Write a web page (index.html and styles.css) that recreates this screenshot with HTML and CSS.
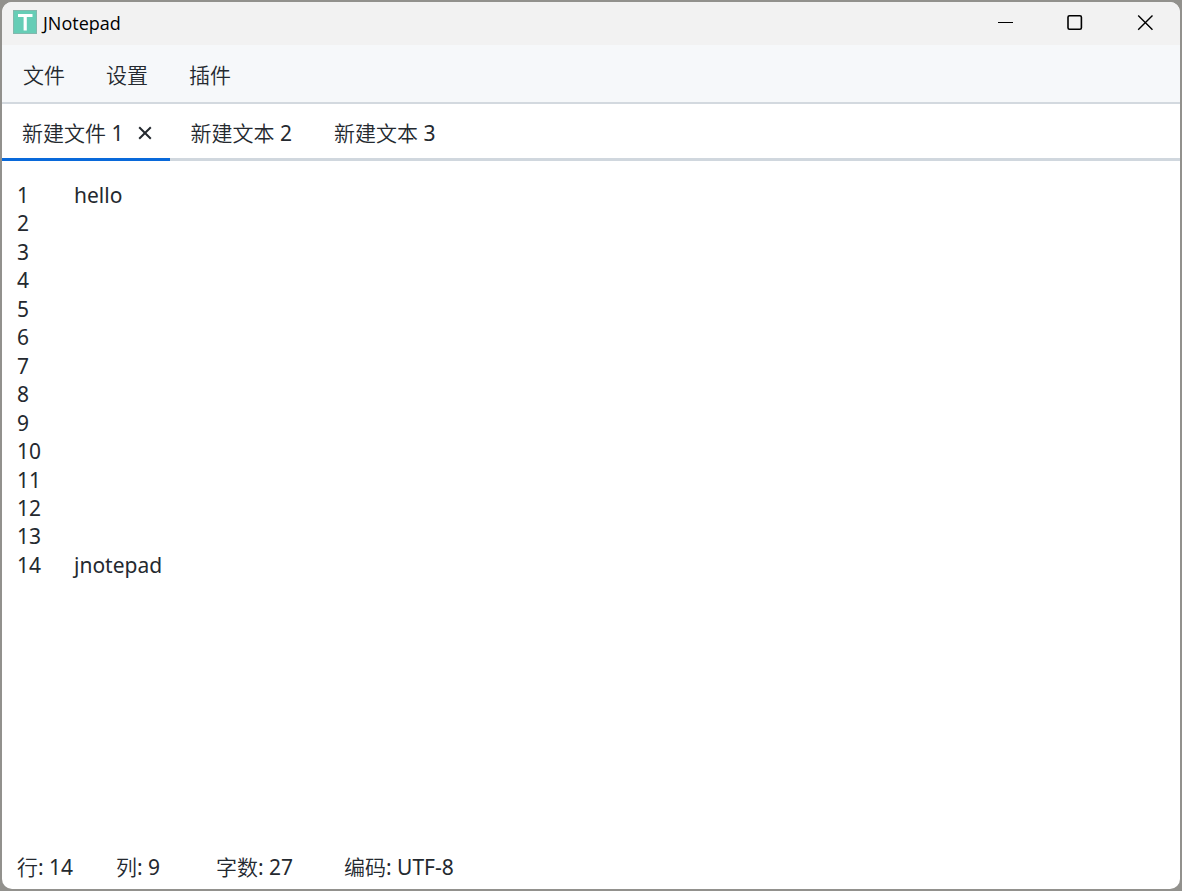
FILE: index.html
```html
<!DOCTYPE html>
<html lang="zh-CN">
<head>
<meta charset="utf-8">
<title>JNotepad</title>
<link rel="stylesheet" href="styles.css">
</head>
<body>
<div class="window">
  <header class="titlebar">
    <svg class="logo" viewBox="0 0 24 24" aria-hidden="true">
      <rect x=".5" y=".5" width="23" height="23" fill="#66cdb6" stroke="#83b8ad"/>
      <path d="M5 5.5H19.5M12.2 5.5V20.5" stroke="#fff" stroke-width="3.2" fill="none"/>
    </svg>
    <span class="app-name">JNotepad</span>
    <div class="window-controls">
      <button aria-label="最小化"><svg viewBox="0 0 16 16"><path d="M1 7.5H16"/></svg></button>
      <button aria-label="最大化"><svg viewBox="0 0 16 16"><rect class="bold" x="1" y=".8" width="13.4" height="13.4" rx="1.5"/></svg></button>
      <button aria-label="关闭"><svg viewBox="0 0 16 16"><path class="cross" d="M1.2 .5L15.5 14.8M15.5 .5L1.2 14.8"/></svg></button>
    </div>
  </header>
  <nav class="menubar">
    <button>文件</button>
    <button>设置</button>
    <button>插件</button>
  </nav>
  <div class="tabs">
    <div class="tab active">
      <button>新建文件 <span class="value">1</span></button>
      <button class="tab-close" aria-label="关闭标签"><svg viewBox="0 0 14 14"><path d="M1.2 1.2L12.8 12.8M12.8 1.2L1.2 12.8"/></svg></button>
    </div>
    <div class="tab"><button>新建文本 <span class="value">2</span></button></div>
    <div class="tab"><button>新建文本 <span class="value">3</span></button></div>
  </div>
  <main class="editor">
    <div class="gutter">1
2
3
4
5
6
7
8
9
10
11
12
13
14</div>
    <textarea class="content" aria-label="文本内容" spellcheck="false">hello












jnotepad</textarea>
  </main>
  <footer class="statusbar">
    <span class="row">行<span class="value">: 14</span></span>
    <span class="column">列<span class="value">: 9</span></span>
    <span class="count">字数<span class="value">: 27</span></span>
    <span>编码<span class="value">: UTF-8</span></span>
  </footer>
</div>
</body>
</html>
```

FILE: styles.css
```css
* {
  box-sizing: border-box;
}

body {
  margin: 0;
  height: 100vh;
  padding: 2px;
  background: #92918d;
  color: #24292f;
  font-family: "Noto Sans", "Noto Sans CJK SC", sans-serif;
  font-size: 21px;
  line-height: 28px;
}

button,
textarea {
  margin: 0;
  padding: 0;
  border: 0;
  background: none;
  color: inherit;
  font: inherit;
}

.window {
  display: flex;
  flex-direction: column;
  height: 100%;
  border-radius: 10px;
  overflow: hidden;
  background: #fff;
}

.titlebar {
  display: flex;
  align-items: center;
  height: 43px;
  padding-left: 11px;
  background: #f2f2f2;
  color: #000;
}

.logo {
  width: 24px;
  height: 24px;
  margin-top: -3px;
}

.app-name {
  margin: -2px 0 0 6px;
  font-family: "Open Sans", "Noto Sans", sans-serif;
  font-size: 18px;
}

.window-controls {
  display: flex;
  margin-left: auto;
  height: 100%;
}

.window-controls button {
  width: 70px;
  padding-bottom: 1px;
  display: grid;
  place-items: center;
}

.window-controls svg {
  width: 16px;
  height: 16px;
  fill: none;
  stroke: #000;
}

.window-controls .bold {
  stroke-width: 1.6;
}

.window-controls .cross {
  stroke-width: 1.4;
}

.menubar {
  display: flex;
  align-items: center;
  gap: 41px;
  height: 59px;
  padding: 2px 21px 0;
  background: #f6f8fa;
  border-bottom: 2px solid #d3d9df;
  font-weight: 350;
}

.tabs {
  display: flex;
  height: 57px;
  box-shadow: inset 0 -3px #d0d7de;
  font-weight: 350;
}

.tab {
  display: flex;
  align-items: center;
  gap: 15px;
  padding: 0 22px 0 20px;
}

.tab.active {
  padding-right: 18px;
  box-shadow: inset 0 -3px #0969da;
}

.value {
  font-weight: 400;
}

.tab-close,
.tab-close svg {
  display: block;
  width: 14px;
  height: 14px;
}

.tab-close svg {
  fill: none;
  stroke: #24292f;
  stroke-width: 2;
}

.editor {
  display: flex;
  flex: 1;
  min-height: 0;
  padding: 20px 15px 0;
  line-height: 1.355;
}

.gutter {
  width: 55px;
  white-space: pre;
}

.content {
  flex: 1;
  padding-left: 2px;
  resize: none;
  outline: none;
}

.statusbar {
  display: flex;
  height: 44px;
  padding: 8px 15px;
  font-weight: 350;
}

.row {
  width: 99px;
}

.column {
  width: 100px;
}

.count {
  width: 128px;
}
```
